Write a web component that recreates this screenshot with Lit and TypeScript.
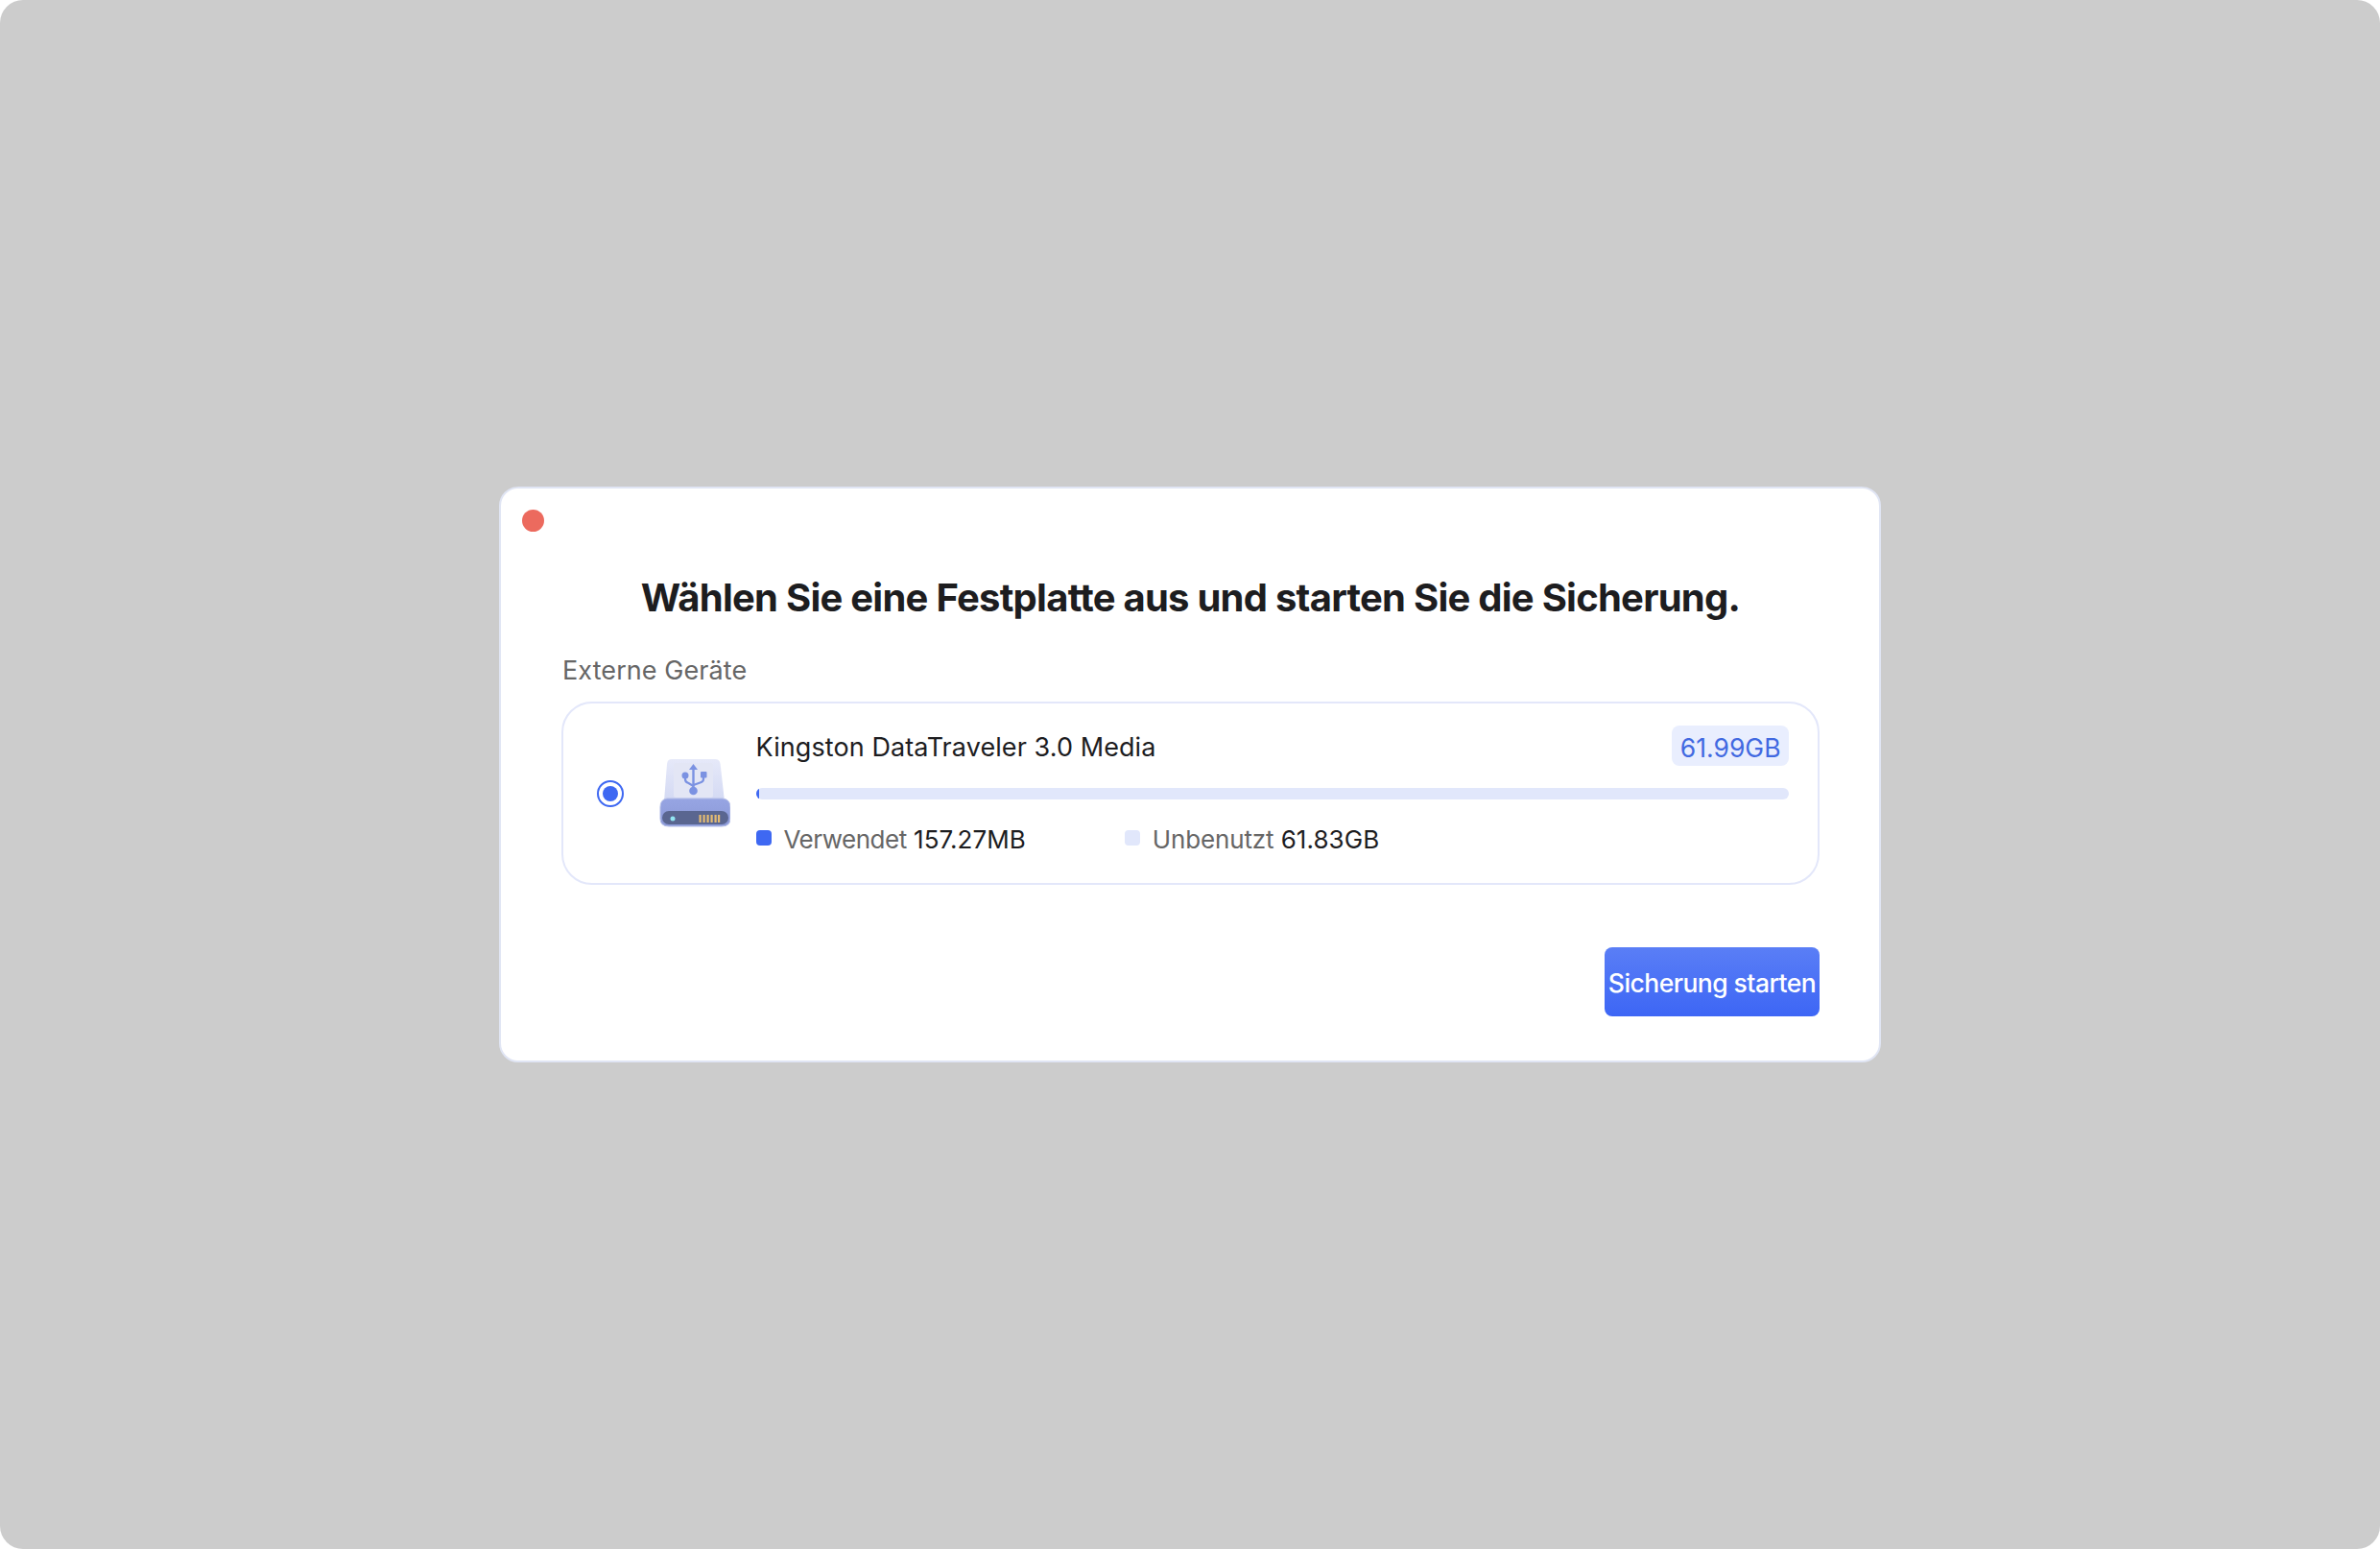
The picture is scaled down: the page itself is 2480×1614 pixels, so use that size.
import { LitElement, html, css } from "lit";
import { customElement } from "lit/decorators.js";

@customElement("app-root")
export class AppRoot extends LitElement {
  static styles = css`
    :host {
      display: flex;
      align-items: center;
      justify-content: center;
      width: 2480px;
      height: 1614px;
      background: #cccccc;
      border-radius: 24px;
      font-family: Inter, "Noto Sans", sans-serif;
      color: #1d1d1f;
      font-size: 27px;
      line-height: 34px;
    }
    .window {
      box-sizing: border-box;
      width: 1440px;
      height: 600px;
      background: #fff;
      border: 2px solid #e0e5f4;
      border-radius: 20px;
      display: flex;
      flex-direction: column;
      padding: 22px 62px 46px 63px;
    }
    .close {
      width: 23px;
      height: 23px;
      border-radius: 50%;
      background: #ec6a5e;
      margin-left: -41px;
      flex: none;
    }
    h1 {
      margin: 44px 0 34px;
      font-size: 40px;
      line-height: 50px;
      font-weight: 700;
      text-align: center;
      color: #1d1d1f;
      letter-spacing: -0.75px;
    }
    .label {
      color: #666;
      margin-bottom: 15px;
      padding-left: 1px;
      letter-spacing: 0.08px;
    }
    .device {
      box-sizing: border-box;
      height: 191px;
      border: 2.5px solid #e3e7fa;
      border-radius: 32px;
      display: flex;
      align-items: center;
      padding: 0 30px 0 35px;
    }
    .radio {
      box-sizing: border-box;
      width: 28px;
      height: 28px;
      border: 2px solid #3e68f2;
      border-radius: 50%;
      display: flex;
      align-items: center;
      justify-content: center;
      flex: none;
      margin-right: 35px;
    }
    .radio::after {
      content: "";
      width: 16px;
      height: 16px;
      border-radius: 50%;
      background: #3e68f2;
    }
    .icon {
      width: 76px;
      height: 76px;
      flex: none;
      margin-right: 26.5px;
    }
    .info {
      flex: 1;
      min-width: 0;
      padding-bottom: 6px;
    }
    .head {
      display: flex;
      align-items: center;
      justify-content: space-between;
      height: 42px;
    }
    .name {
      padding-top: 5px;
      letter-spacing: 0.08px;
    }
    .badge {
      box-sizing: border-box;
      height: 42px;
      line-height: 46px;
      padding: 0 8.5px;
      border-radius: 8px;
      background: #e9eefe;
      color: #4169e1;
      font-size: 26.5px;
    }
    .bar {
      height: 12px;
      margin: 23px 0 24px;
      border-radius: 6px;
      background: #e1e7fb;
      overflow: hidden;
    }
    .fill {
      height: 100%;
      background: #3e68f2;
    }
    .legend {
      display: flex;
      align-items: center;
      font-size: 26px;
      padding-top: 1px;
    }
    .swatch {
      width: 16px;
      height: 16px;
      border-radius: 4px;
      margin-right: 13px;
      flex: none;
      position: relative;
      top: -2px;
    }
    .used { background: #3e68f2; }
    .free { background: #e1e7fb; }
    .muted { color: #666; }
    .tight { letter-spacing: -0.5px; }
    .snug { letter-spacing: -0.15px; }
    .value { letter-spacing: 0.05px; }
    .item + .swatch { margin-left: 103px; }
    .actions {
      margin-top: auto;
      display: flex;
      justify-content: flex-end;
    }
    button {
      width: 224px;
      height: 72px;
      padding: 2px 0 0;
      border: none;
      border-radius: 8px;
      background: linear-gradient(180deg, #5a7ef6, #3d66f5);
      color: #fff;
      font: 500 26.500px/34px Inter, "Noto Sans", sans-serif;
      letter-spacing: -0.55px;
      white-space: nowrap;
    }
  `;

  private icon() {
    return html`<svg class="icon" viewBox="16 14 76 76" aria-hidden="true">
      <defs>
        <linearGradient id="top" x1="0" y1="0" x2="0" y2="1">
          <stop offset="0" stop-color="#e6e9f9" />
          <stop offset="1" stop-color="#d3d9f3" />
        </linearGradient>
        <linearGradient id="band" x1="0" y1="0" x2="0" y2="1">
          <stop offset="0" stop-color="#97a5e3" />
          <stop offset="1" stop-color="#8a98d6" />
        </linearGradient>
      </defs>
      <path d="M31 16H76Q81 16 81.6 21L86 60H23L26 21Q26.500 16 31 16Z" fill="url(#top)" />
      <rect x="33" y="20" width="41" height="36" rx="2" fill="#e3e6f5" />
      <path d="M26 57H84Q92 58 92 66V78Q92 86 83 86H28Q19 86 19 78V66Q19 58 26 57Z" fill="url(#band)" stroke="#b5bfe8" stroke-width="1" />
      <rect x="21" y="70" width="69" height="14" rx="7" fill="#5a6690" />
      <circle cx="32" cy="78" r="2.500" fill="#93e6f2" />
      <g fill="#e3bb73">
        <rect x="59.500" y="74" width="2.200" height="8" />
        <rect x="63.500" y="74" width="2.200" height="8" />
        <rect x="67.500" y="74" width="2.200" height="8" />
        <rect x="71.500" y="74" width="2.200" height="8" />
        <rect x="75.500" y="74" width="2.200" height="8" />
        <rect x="79" y="74" width="2.200" height="8" />
      </g>
      <g fill="#7b92e2" stroke="none">
        <path d="M53.500 21L58 27H49Z" />
        <rect x="52.300" y="26" width="2.400" height="22" />
        <circle cx="53.500" cy="49" r="4.300" />
        <circle cx="45" cy="33" r="3.500" />
        <rect x="61" y="29" width="6.500" height="6.500" rx="1" />
      </g>
      <path d="M45 34V37Q45 40 48.500 41L53.500 44M64 35V37Q64 39.500 60.500 40.500L53.500 43" fill="none" stroke="#7b92e2" stroke-width="2.200" />
    </svg>`;
  }

  render() {
    return html`
      <section class="window">
        <div class="close"></div>
        <h1>Wählen Sie eine Festplatte aus und starten Sie die Sicherung.</h1>
        <div class="label">Externe Geräte</div>
        <div class="device">
          <div class="radio"></div>
          ${this.icon()}
          <div class="info">
            <div class="head">
              <span class="name">Kingston DataTraveler 3.0 Media</span>
              <span class="badge">61.99GB</span>
            </div>
            <div class="bar"><div class="fill" style="width: ${(157.27 / 1024 / 61.99) * 100 + 0.1}%"></div></div>
            <div class="legend">
              <span class="swatch used"></span>
              <span class="item"><span class="muted tight">Verwendet</span> <span class="value">157.27MB</span></span>
              <span class="swatch free"></span>
              <span class="item"><span class="muted snug">Unbenutzt</span> <span class="value">61.83GB</span></span>
            </div>
          </div>
        </div>
        <div class="actions"><button>Sicherung starten</button></div>
      </section>
    `;
  }
}
